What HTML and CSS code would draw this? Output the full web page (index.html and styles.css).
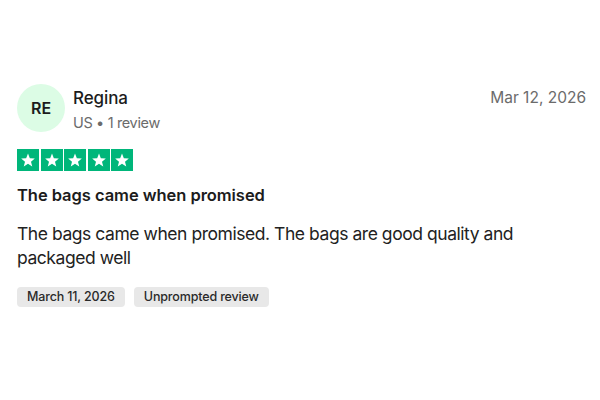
FILE: index.html
```html
<!DOCTYPE html>
<html lang="en">
<head>
<meta charset="utf-8">
<link rel="stylesheet" href="styles.css">
</head>
<body>
<article class="review">
  <header class="review-header">
    <div class="consumer">
      <div class="avatar">RE</div>
      <div class="consumer-info">
        <div class="consumer-name">Regina</div>
        <div class="consumer-meta">US • 1 review</div>
      </div>
    </div>
    <time class="review-date">Mar 12, 2026</time>
  </header>
  <div class="stars" aria-label="Rated 5 out of 5">
    <span class="star"><svg viewBox="0 0 24 24"><path d="M12 4.2l2.2 5.6 6 .4-4.6 3.8 1.5 5.8L12 16.6l-5.1 3.2 1.5-5.8-4.6-3.8 6-.4z"/></svg></span>
    <span class="star"><svg viewBox="0 0 24 24"><path d="M12 4.2l2.2 5.6 6 .4-4.6 3.8 1.5 5.8L12 16.6l-5.1 3.2 1.5-5.8-4.6-3.8 6-.4z"/></svg></span>
    <span class="star"><svg viewBox="0 0 24 24"><path d="M12 4.2l2.2 5.6 6 .4-4.6 3.8 1.5 5.8L12 16.6l-5.1 3.2 1.5-5.8-4.6-3.8 6-.4z"/></svg></span>
    <span class="star"><svg viewBox="0 0 24 24"><path d="M12 4.2l2.2 5.6 6 .4-4.6 3.8 1.5 5.8L12 16.6l-5.1 3.2 1.5-5.8-4.6-3.8 6-.4z"/></svg></span>
    <span class="star"><svg viewBox="0 0 24 24"><path d="M12 4.2l2.2 5.6 6 .4-4.6 3.8 1.5 5.8L12 16.6l-5.1 3.2 1.5-5.8-4.6-3.8 6-.4z"/></svg></span>
  </div>
  <h2 class="review-title">The bags came when promised</h2>
  <p class="review-text">The bags came when promised. The bags are good quality and packaged well</p>
  <div class="tags">
    <span class="tag">March 11, 2026</span>
    <span class="tag">Unprompted review</span>
  </div>
</article>
</body>
</html>
```
FILE: styles.css
```css
html, body {
  margin: 0;
  padding: 0;
  background: #ffffff;
}
body {
  font-family: Inter, "Noto Sans", sans-serif;
  color: #1c1c1c;
}
.review {
  padding: 84px 14px 0 17px;
  width: 569px;
}
.review-header {
  display: flex;
  justify-content: space-between;
  align-items: flex-start;
}
.consumer {
  display: flex;
  align-items: flex-start;
  gap: 8px;
}
.avatar {
  width: 48px;
  height: 48px;
  border-radius: 50%;
  background: #dcfce5;
  display: flex;
  align-items: center;
  justify-content: center;
  font-size: 16px;
  font-weight: 600;
  color: #1c1c1c;
}
.consumer-info {
  padding-top: 3px;
}
.consumer-name {
  font-size: 17px;
  font-weight: 500;
  line-height: 22px;
  letter-spacing: -0.1px;
}
.consumer-meta {
  font-size: 14.5px;
  letter-spacing: -0.35px;
  color: #6b6b6b;
  line-height: 20px;
  margin-top: 4px;
}
.review-date {
  font-size: 15.5px;
  color: #6b6b6b;
  line-height: 22px;
  padding-top: 3px;
}
.stars {
  display: flex;
  gap: 1.5px;
  margin-top: 16px;
}
.star {
  width: 22px;
  height: 22px;
  background: #00b67a;
  display: flex;
  align-items: center;
  justify-content: center;
}
.star svg {
  width: 20px;
  height: 20px;
  fill: #ffffff;
}
.review-title {
  margin: 12px 0 0;
  font-size: 16.5px;
  font-weight: 600;
  line-height: 24px;
  letter-spacing: -0.05px;
}
.review-text {
  margin: 15px 0 0;
  font-size: 17.5px;
  letter-spacing: -0.45px;
  line-height: 24px;
  color: #222222;
}
.tags {
  display: flex;
  gap: 9px;
  margin-top: 17px;
}
.tag {
  background: #e8e8e8;
  border-radius: 4px;
  padding: 0 10px;
  font-size: 12.5px;
  font-weight: 500;
  letter-spacing: -0.15px;
  line-height: 20px;
  color: #2a2a2a;
}
```
